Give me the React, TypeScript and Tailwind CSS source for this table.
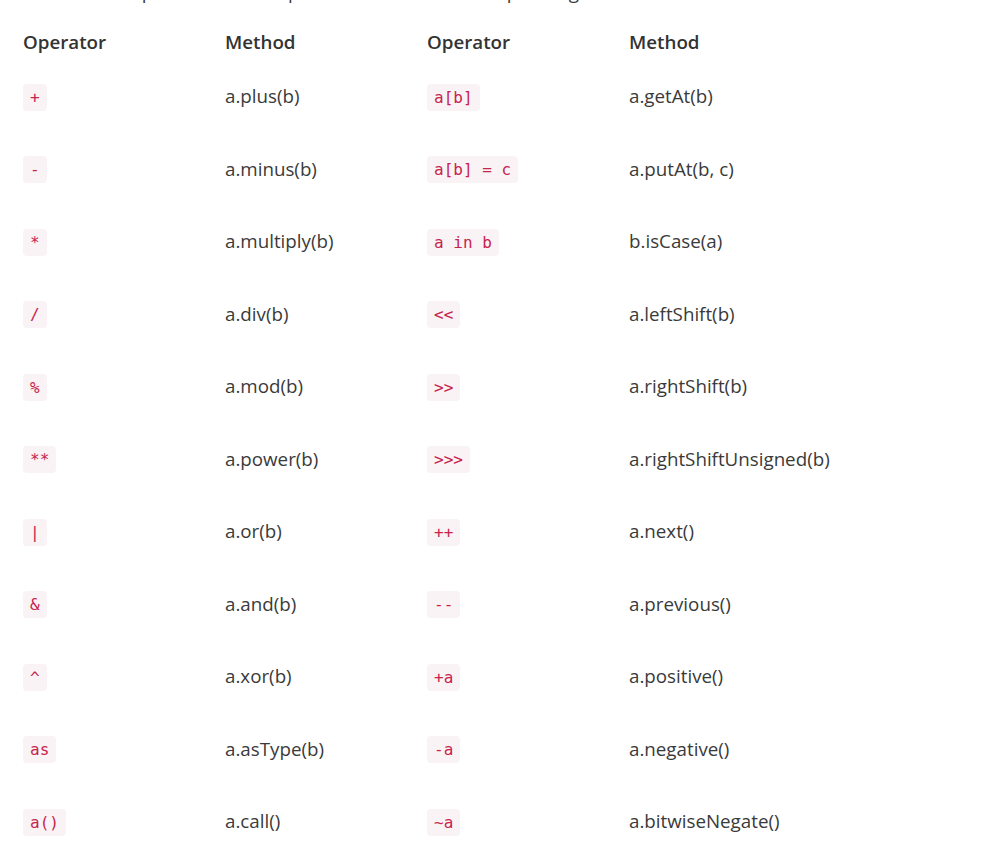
import React from "react";

const rows: [string, string, string, string][] = [
  ["+", "a.plus(b)", "a[b]", "a.getAt(b)"],
  ["-", "a.minus(b)", "a[b] = c", "a.putAt(b, c)"],
  ["*", "a.multiply(b)", "a in b", "b.isCase(a)"],
  ["/", "a.div(b)", "<<", "a.leftShift(b)"],
  ["%", "a.mod(b)", ">>", "a.rightShift(b)"],
  ["**", "a.power(b)", ">>>", "a.rightShiftUnsigned(b)"],
  ["|", "a.or(b)", "++", "a.next()"],
  ["&", "a.and(b)", "--", "a.previous()"],
  ["^", "a.xor(b)", "+a", "a.positive()"],
  ["as", "a.asType(b)", "-a", "a.negative()"],
  ["a()", "a.call()", "~a", "a.bitwiseNegate()"],
];

function Code({ children }: { children: string }) {
  return (
    <code className="inline-block rounded-[4px] bg-[#f9f3f5] px-[7px] py-[2px] font-['DejaVu_Sans_Mono',monospace] text-[16px] leading-[23px] text-[#c7254e] whitespace-pre">
      {children}
    </code>
  );
}

export default function App() {
  return (
    <div className="min-h-screen overflow-hidden bg-white font-['Open_Sans',sans-serif] text-[18.75px] text-[#3a3a3a]">
      <p className="mt-[-23px] h-[29px] pl-[23px] leading-[29px] whitespace-nowrap">
        Here is a complete list of the operators and their corresponding methods:
      </p>
      <div className="mt-[18px] pl-[23px]">
        <div className="grid h-[36px] grid-cols-[202px_202px_202px_202px] items-center font-semibold text-[#333]">
          <div>Operator</div>
          <div>Method</div>
          <div>Operator</div>
          <div>Method</div>
        </div>
        {rows.map((r, i) => (
          <div
            key={i}
            className="grid h-[72.5px] grid-cols-[202px_202px_202px_202px] items-center"
          >
            <div>
              <Code>{r[0]}</Code>
            </div>
            <div>{r[1]}</div>
            <div>
              <Code>{r[2]}</Code>
            </div>
            <div>{r[3]}</div>
          </div>
        ))}
      </div>
    </div>
  );
}
